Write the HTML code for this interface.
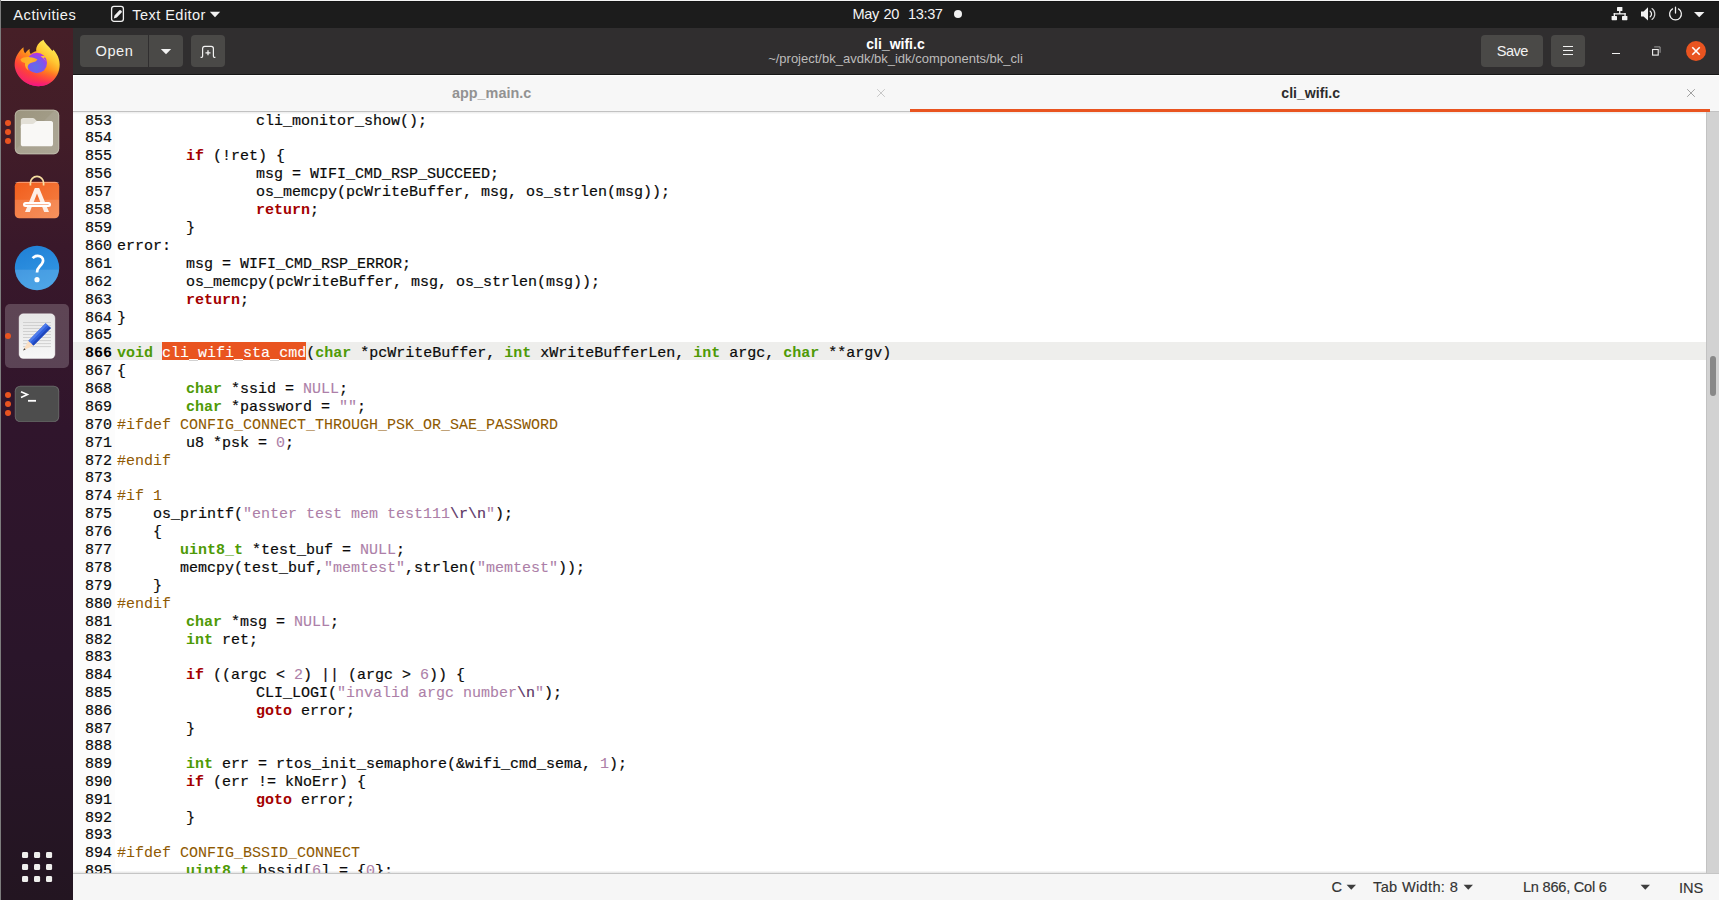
<!DOCTYPE html>
<html>
<head>
<meta charset="utf-8">
<title>cli_wifi.c</title>
<style>
*{box-sizing:border-box;margin:0;padding:0}
html,body{width:1719px;height:900px;overflow:hidden;background:#fff}
body{font-family:"Liberation Sans",sans-serif;position:relative}
.abs{position:absolute}
/* top bar */
#topbar{position:absolute;left:0;top:0;width:1719px;height:28px;background:#1c1c1c;color:#fff}
#topbar .t{position:absolute;top:0;height:28px;line-height:29px;font-size:14.6px;white-space:nowrap;color:#f4f4f4}
/* dock */
#dock{position:absolute;left:0;top:28px;width:73px;height:872px;background:linear-gradient(to bottom,#461f27 0%,#421d28 12%,#39182a 25%,#30152c 46%,#2a152a 72%,#231521 100%)}
.dot{position:absolute;width:6px;height:6px;border-radius:3px;background:#e95420}
/* header bar */
#hdr{position:absolute;left:73px;top:28px;width:1646px;height:47px;background:#302e2f;border-bottom:1px solid #161616}
.btn{position:absolute;top:7px;height:32px;background:#4a4947;border-radius:4px;color:#f2f2f2;font-size:14.6px;line-height:32px;text-align:center}
/* tab bar */
#tabs{position:absolute;left:73px;top:75px;width:1646px;height:37px;background:#f7f7f7;border-top:1px solid #fff;border-left:1px solid #fff}
#tabs .line{position:absolute;left:-1px;top:35px;width:1646px;height:1px;background:#c2c2c2}
#tabs .act{position:absolute;left:836px;top:33px;width:800px;height:3px;background:#e95420}
#tabs .lbl{position:absolute;top:0;margin-left:-1px;height:36px;line-height:37px;font-size:14.4px;font-weight:bold;white-space:nowrap}
/* code */
#code{position:absolute;left:73px;top:112px;width:1633px;height:761px;background:#fff;overflow:hidden}
#gut{position:absolute;left:0;top:0;width:42px;height:761px;background:#fcfcfc}
#curline{position:absolute;left:0;top:230px;width:1633px;height:18px;background:#eeeeec}
#sel{position:absolute;left:89px;top:230px;width:144px;height:18px;background:#e95420}
#src{position:absolute;left:0;top:0;width:1633px;font-family:"Liberation Mono",monospace;font-size:15px;line-height:18px;color:#0a0a0a;-webkit-text-stroke-width:0.2px}
#src div{position:absolute;left:0;height:18px;padding-left:44px;white-space:pre}
#src b{display:inline-block;height:1px}#src .t1{width:69px}#src .t2{width:139px}
#src i{position:absolute;left:12px;top:0;font-style:normal;color:#0a0a0a}
#src .cur i{font-weight:bold;color:#000;-webkit-text-stroke-width:0}
#src .k{color:#a40000;font-weight:bold;-webkit-text-stroke-width:0}
#src .t{color:#4e9a06;font-weight:bold;-webkit-text-stroke-width:0}
#src .s{color:#ad7fa8;-webkit-text-stroke-width:0.1px}
#src .n{color:#ad7fa8;-webkit-text-stroke-width:0.1px}
#src .p{color:#8f5902;-webkit-text-stroke-width:0.05px}
#src .e{color:#5c3566}
#src .x{color:#fff;-webkit-text-stroke-width:0.1px}#src u{color:transparent;text-decoration:none}
/* scrollbar */
#sb{position:absolute;left:1706px;top:112px;width:13px;height:761px;background:#d2d2d2;border-left:1px solid #c2c2c2}
#sb b{position:absolute;left:3px;top:244px;width:6px;height:40px;border-radius:3px;background:#888}
/* status */
#status{position:absolute;left:73px;top:873px;width:1646px;height:27px;background:#f6f6f6;border-top:1px solid #c5c5c5;color:#2c2c2c}
#status .t{position:absolute;top:-1px;height:27px;line-height:29px;font-size:14.6px;white-space:nowrap;color:#333;-webkit-text-stroke-width:0.15px}
</style>
</head>
<body>
<div id="topbar">
  <div class="abs" style="left:0;top:0;width:1719px;height:1px;background:#f4f4f4"></div><div class="abs" style="left:0;top:1px;width:1719px;height:1px;background:#141414"></div>
  <div class="t" style="left:13.3px;top:1.4px;letter-spacing:0.55px">Activities</div>
  <svg class="abs" style="left:108px;top:3px" width="20" height="22" viewBox="0 0 20 22"><rect x="3.6" y="3.3" width="11.8" height="15" rx="2.4" fill="none" stroke="#f2f2f2" stroke-width="1.3"/><path d="M5.8 15.5 L6.5 12.4 L11.4 7.2 Q12.2 6.6 13 7.4 L13.6 8 Q14.3 8.8 13.6 9.5 L8.8 14.6 Z" fill="#f2f2f2"/></svg>
  <div class="t" style="left:132.3px;top:1.4px;letter-spacing:0.42px">Text Editor</div>
  <svg class="abs" style="left:209px;top:11px" width="12" height="7" viewBox="0 0 12 7"><path d="M0.8 0.8 H11.2 L6 6.2 Z" fill="#f2f2f2"/></svg>
  <div class="t" style="left:852.5px;top:0;letter-spacing:-0.42px;word-spacing:1px">May 20&nbsp; 13:37</div>
  <div class="abs" style="left:954px;top:10px;width:8.4px;height:8.4px;border-radius:5px;background:#f2f2f2"></div>
  <svg class="abs" style="left:1608px;top:4px" width="100" height="20" viewBox="0 0 100 20">
    <g fill="#f2f2f2">
      <rect x="9" y="3" width="5.4" height="4" rx="0.6"/><rect x="3.6" y="12" width="5.4" height="4.2" rx="0.6"/><rect x="14" y="12" width="5.4" height="4.2" rx="0.6"/>
      <rect x="11.1" y="6.5" width="1.3" height="3.4"/><rect x="5.7" y="9.2" width="12" height="1.3"/><rect x="5.7" y="9.2" width="1.3" height="3.2"/><rect x="16.4" y="9.2" width="1.3" height="3.2"/>
      <path d="M33 7.4 H35.6 L40 3.3 V16.5 L35.6 12.6 H33 Z"/>
      <path d="M86 8 H96.4 L91.2 13.2 Z"/>
    </g>
    <g fill="none" stroke="#f2f2f2" stroke-linecap="round">
      <path d="M42.2 7.2 A3.6 3.6 0 0 1 42.2 12.8" stroke-width="1.3"/>
      <path d="M44 4.6 A6.6 6.6 0 0 1 44 15.4" stroke-width="1.2" opacity="0.85"/>
      <path d="M64.5 4.9 A5.9 5.9 0 1 0 70.5 4.9" stroke-width="1.25"/>
      <path d="M67.5 3 V9" stroke-width="1.25"/>
    </g>
  </svg>
</div>
<div id="dock">
  <div class="abs" style="left:0;top:-28px;width:1px;height:900px;background:#7d7d7d"></div>
  <!-- firefox : page box (8,34) 60x60 -->
  <svg class="abs" style="left:8px;top:6px" width="60" height="60" viewBox="0 0 60 60">
    <defs>
      <linearGradient id="ffb" x1="46" y1="10" x2="16" y2="50" gradientUnits="userSpaceOnUse">
        <stop offset="0" stop-color="#fff45a"/><stop offset="0.28" stop-color="#ffc732"/><stop offset="0.5" stop-color="#ff8a1c"/><stop offset="0.75" stop-color="#ff4636"/><stop offset="1" stop-color="#ef1c7e"/>
      </linearGradient>
      <radialGradient id="ffg" cx="28" cy="33" r="15" gradientUnits="userSpaceOnUse">
        <stop offset="0" stop-color="#5f6fe6"/><stop offset="0.55" stop-color="#7e55ee"/><stop offset="1" stop-color="#c02fe0"/>
      </radialGradient>
      <linearGradient id="ffh" x1="12" y1="24" x2="30" y2="30" gradientUnits="userSpaceOnUse">
        <stop offset="0" stop-color="#ffa722"/><stop offset="0.6" stop-color="#ffb52c"/><stop offset="1" stop-color="#ff9a1e"/>
      </linearGradient>
      <linearGradient id="ffm" x1="30" y1="36" x2="30" y2="52.5" gradientUnits="userSpaceOnUse">
        <stop offset="0" stop-color="#ff3a3a" stop-opacity="0"/><stop offset="0.55" stop-color="#ff2a5a" stop-opacity="0.45"/><stop offset="1" stop-color="#f0108c" stop-opacity="1"/>
      </linearGradient>
    </defs>
    <path d="M15.5 13.3 C15.3 16 16 18 17.2 19.3 C18.5 17.5 20 16 21.7 15 C21.3 17 21.8 18.8 22.8 20 C24.5 18.5 26.5 17.5 28.3 17.2 C27.5 12.5 31 8 35.5 5.7 C36.5 9 41 12.5 44.5 17 L45.3 15.6 C48 18.5 50 22 50.8 25 C53 32 51 40 46 45.5 C41 51 33 53.5 25 51.5 C16 49.5 8.5 42 7 34 C6 28.5 7.5 23 10 19.5 C11.5 17 13.5 14.8 15.5 13.3 Z" fill="url(#ffb)"/>
    <path d="M15.5 13.3 C15.3 16 16 18 17.2 19.3 C18.5 17.5 20 16 21.7 15 C21.3 17 21.8 18.8 22.8 20 C24.5 18.5 26.5 17.5 28.3 17.2 C27.5 12.5 31 8 35.5 5.7 C36.5 9 41 12.5 44.5 17 L45.3 15.6 C48 18.5 50 22 50.8 25 C53 32 51 40 46 45.5 C41 51 33 53.5 25 51.5 C16 49.5 8.5 42 7 34 C6 28.5 7.5 23 10 19.5 C11.5 17 13.5 14.8 15.5 13.3 Z" fill="url(#ffm)"/>
    <circle cx="28.8" cy="29" r="10.2" fill="url(#ffg)"/>
    <path d="M12.4 25.6 C14.5 23.4 18 22.8 22 23.2 C25 23.6 27.8 24.4 29.4 25.3 C28.8 27.2 26.6 28 24.2 28.6 C22 29.2 20.4 30.2 19.8 32 C19.4 33.4 19.8 35 20.6 36.4 C17.8 34.8 16.6 31.8 17 29 C14.8 28.8 12.8 27.6 12.4 25.6 Z" fill="url(#ffh)"/>
    <path d="M32.6 22.3 C34.8 21.5 37 22 38.4 23.3 C37.2 23.1 36.2 23.3 35.6 23.9 C36.8 25.2 37.6 26.6 38 28 C36.8 25.8 35 23.8 32.6 22.3 Z" fill="#ffc033"/>
  </svg>
  <!-- dots -->
  <div class="dot" style="left:5px;top:92.3px"></div><div class="dot" style="left:5px;top:101px"></div><div class="dot" style="left:5px;top:109.8px"></div>
  <!-- files : page (14.8,109.7)-(59.2,154.3) -->
  <svg class="abs" style="left:13px;top:80px" width="48" height="48" viewBox="0 0 48 48">
    <defs><linearGradient id="fbg" x1="0" y1="0" x2="1" y2="1"><stop offset="0" stop-color="#9c957f"/><stop offset="0.45" stop-color="#a19b86"/><stop offset="0.46" stop-color="#a8a290"/><stop offset="1" stop-color="#aca695"/></linearGradient></defs>
    <rect x="1.8" y="1.7" width="44.4" height="44.6" rx="5.5" fill="url(#fbg)"/>
    <rect x="2.3" y="2.2" width="43.4" height="43.6" rx="5" fill="none" stroke="#c9c5b8" stroke-width="0.9" opacity="0.7"/>
    <path d="M7.8 12.6 Q7.8 10 10.4 10 H19.8 Q20.8 10 21.6 10.8 L23.8 13 H37.4 Q40 13 40 15.6 V20 H7.8 Z" fill="#e3e0d7"/>
    <path d="M7.8 18.5 Q7.8 16 10.3 16 H19.4 Q20.4 16 21.2 15.3 L22.8 13.8 Q23.6 13 24.6 13 H37.4 Q40 13 40 15.6 V35.7 Q40 38.3 37.4 38.3 H10.4 Q7.8 38.3 7.8 35.7 Z" fill="#f9f8f6"/>
  </svg>
  <!-- software : page bag (14.8,181.7)-(59.2,218.3) -->
  <svg class="abs" style="left:13px;top:144px" width="48" height="50" viewBox="0 0 48 50">
    <defs><linearGradient id="sbg" x1="0" y1="0" x2="1" y2="1"><stop offset="0" stop-color="#f15d1c"/><stop offset="1" stop-color="#f58246"/></linearGradient></defs>
    <rect x="1.8" y="9.7" width="44.4" height="36.6" rx="4.5" fill="url(#sbg)"/>
    <path d="M1.8 27.7 H46.2 V41.8 Q46.2 46.3 41.7 46.3 H6.3 Q1.8 46.3 1.8 41.8 Z" fill="#fff" opacity="0.13"/>
    <rect x="2.3" y="10.1" width="43.4" height="1" rx="0.5" fill="#fff" opacity="0.35"/>
    <path d="M17.4 13.6 V11 A6.6 6.6 0 0 1 30.6 11 V13.6" fill="none" stroke="#f7dfa2" stroke-width="1.7"/>
    <path d="M12 40 L21.8 16 H26.2 L36 40 H31.2 L24 21.6 L16.8 40 Z" fill="#fdeee6"/>
    <rect x="10" y="30" width="28" height="5" rx="2.5" fill="#fff"/>
    <rect x="12.4" y="32.1" width="23.2" height="0.8" fill="#f6a27c"/>
  </svg>
  <!-- help : circle centre page (37,268) r 22.2 -->
  <svg class="abs" style="left:13px;top:216px" width="48" height="48" viewBox="0 0 48 48">
    <defs><linearGradient id="hbg" x1="0" y1="0" x2="0.35" y2="1"><stop offset="0" stop-color="#1f7fd6"/><stop offset="1" stop-color="#3397e3"/></linearGradient><clipPath id="hcl"><circle cx="24" cy="24" r="22.2"/></clipPath></defs>
    <circle cx="24" cy="24" r="22.2" fill="url(#hbg)"/>
    <rect x="0" y="25.7" width="48" height="24" fill="#fff" opacity="0.13" clip-path="url(#hcl)"/>
    <path d="M19.6 14.2 C21 12.6 22.8 11.8 24.8 11.9 C28 12 30.2 14 30.1 16.7 C30 18.8 28.6 20.4 26.8 22.2 C25 24 24 25.6 24 28.6" fill="none" stroke="#fff" stroke-width="2.7"/>
    <circle cx="24" cy="35.7" r="2.6" fill="#fff"/>
  </svg>
  <!-- gedit active -->
  <div class="abs" style="left:5px;top:276px;width:64px;height:64px;border-radius:5px;background:rgba(255,255,255,0.2)"></div>
  <div class="dot" style="left:5px;top:305px"></div>
  <svg class="abs" style="left:13px;top:282px" width="48" height="52" viewBox="0 0 48 52">
    <defs><linearGradient id="pbg" x1="0" y1="0" x2="0" y2="1"><stop offset="0" stop-color="#e6e6e6"/><stop offset="1" stop-color="#f7f7f7"/></linearGradient></defs>
    <rect x="6.1" y="3.8" width="35.8" height="44.6" rx="4.2" fill="url(#pbg)"/>
    <rect x="6.1" y="3.8" width="35.8" height="44.6" rx="4.2" fill="none" stroke="#fff" stroke-width="0.6" opacity="0.7"/>
    <g fill="#cdcdcd"><rect x="10" y="12" width="28" height="0.9"/><rect x="10" y="15" width="28" height="0.9"/><rect x="10" y="18" width="28" height="0.9"/><rect x="10" y="21.1" width="28" height="0.9"/><rect x="10" y="24.1" width="28" height="0.9"/><rect x="10" y="27.1" width="28" height="0.9"/><rect x="10" y="30.2" width="28" height="0.9"/><rect x="10" y="33.2" width="28" height="0.9"/><rect x="10" y="36.2" width="28" height="0.9"/></g>
    <path d="M10 40.6 L15.4 30.8 L20.6 35.6 Z" fill="#fbdfc2"/>
    <path d="M10 40.6 L11.3 38.2 L12.7 39.4 Z" fill="#3b3b3b"/>
    <path d="M15.4 30.8 L32.6 13.2 L37.9 18 L20.6 35.6 Z" fill="#2f5fdc"/>
    <path d="M15.4 30.8 L32.6 13.2 L34.4 14.8 L17.1 32.4 Z" fill="#4f7cec"/>
    <path d="M18.9 34 L36.1 16.4 L37.9 18 L20.6 35.6 Z" fill="#2047bd"/>
  </svg>
  <!-- terminal : page (14.8,385.7)-(59.2,422.1) -->
  <div class="dot" style="left:5px;top:364.3px"></div><div class="dot" style="left:5px;top:373px"></div><div class="dot" style="left:5px;top:381.8px"></div>
  <svg class="abs" style="left:13px;top:354px" width="48" height="44" viewBox="0 0 48 44">
    <rect x="1.8" y="3.7" width="44.4" height="36.4" rx="5.5" fill="#6c6c6c"/>
    <rect x="2.6" y="4.6" width="42.8" height="34.8" rx="4.8" fill="#4d4d4d"/>
    <path d="M8 9.7 L14.4 12.6 L8 15.5" fill="none" stroke="#fff" stroke-width="1.6"/>
    <rect x="15" y="17.9" width="8" height="1.8" fill="#fff"/>
  </svg>
  <!-- show apps -->
  <svg class="abs" style="left:20px;top:822px" width="34" height="34" viewBox="0 0 34 34"><g fill="#efefed"><rect x="2" y="2" width="6.1" height="6.1" rx="1.4"/><rect x="14" y="2" width="6.1" height="6.1" rx="1.4"/><rect x="26" y="2" width="6.1" height="6.1" rx="1.4"/><rect x="2" y="14" width="6.1" height="6.1" rx="1.4"/><rect x="14" y="14" width="6.1" height="6.1" rx="1.4"/><rect x="26" y="14" width="6.1" height="6.1" rx="1.4"/><rect x="2" y="26" width="6.1" height="6.1" rx="1.4"/><rect x="14" y="26" width="6.1" height="6.1" rx="1.4"/><rect x="26" y="26" width="6.1" height="6.1" rx="1.4"/></g></svg>

</div>
<div id="hdr">
  <div class="btn" style="left:7px;width:68px;border-radius:4px 0 0 4px;letter-spacing:0.55px;padding-left:1px">Open</div>
  <div class="btn" style="left:76px;width:34px;border-radius:0 4px 4px 0"><svg class="abs" style="left:11px;top:13px" width="12" height="7" viewBox="0 0 12 7"><path d="M0.8 0.9 H11.2 L6 6.3 Z" fill="#f2f2f2"/></svg></div>
  <div class="btn" style="left:118px;width:34px"><svg class="abs" style="left:8px;top:9px" width="18" height="15" viewBox="0 0 18 15"><path d="M1.6 13.4 H2.6 Q3.6 13.4 3.6 12.2 V4.6 Q3.6 2.4 5.8 2.4 H12.2 Q14.4 2.4 14.4 4.6 V12.2 Q14.4 13.4 15.4 13.4 H16.4" fill="none" stroke="#f2f2f2" stroke-width="1.2"/><path d="M9 6.3 V11.3 M6.5 8.8 H11.5" stroke="#f2f2f2" stroke-width="1.3" fill="none"/></svg></div>
  <div class="btn" style="left:1408px;width:62px;letter-spacing:-0.55px;padding-left:0.5px">Save</div>
  <div class="btn" style="left:1478px;width:34px"><div class="abs" style="left:12px;top:11.2px;width:10px;height:1.2px;background:#f2f2f2"></div><div class="abs" style="left:12px;top:15.2px;width:10px;height:1.2px;background:#f2f2f2"></div><div class="abs" style="left:12px;top:19.1px;width:10px;height:1.2px;background:#f2f2f2"></div></div>
  <div class="abs" style="left:1539px;top:25px;width:8.2px;height:1.2px;background:#f2f2f2"></div>
  <svg class="abs" style="left:1576px;top:16px" width="14" height="14" viewBox="0 0 14 14"><path d="M5.2 2.9 H11.1 V8.8" fill="none" stroke="#9b9b9b" stroke-width="1"/><rect x="3.6" y="5.5" width="5.6" height="5.6" fill="none" stroke="#f2f2f2" stroke-width="1.1"/></svg>
  <div class="abs" style="left:1613px;top:13px;width:20px;height:20px;border-radius:10px;background:#e95420"></div>
  <svg class="abs" style="left:1613px;top:13px" width="20" height="20" viewBox="0 0 20 20"><path d="M6.3 6.3 L13.7 13.7 M13.7 6.3 L6.3 13.7" stroke="#fff" stroke-width="1.6" fill="none"/></svg>
  <div class="abs" style="left:0;top:7px;width:1645px;text-align:center;font-size:14px;font-weight:bold;color:#fff;line-height:18px">cli_wifi.c</div>
  <div class="abs" style="left:0;top:23.3px;width:1645px;text-align:center;font-size:13px;color:#bdbcbb;line-height:16px">~/project/bk_avdk/bk_idk/components/bk_cli</div>
</div>
<div id="tabs">
  <div class="line"></div>
  <div class="act"></div>
  <div class="lbl" style="left:379px;top:-1px;color:#929292">app_main.c</div>
  <div class="lbl" style="left:1208.3px;top:-1px;color:#2c2c2c;font-size:14.1px">cli_wifi.c</div>
  <svg class="abs" style="left:802px;top:12px" width="10" height="10" viewBox="0 0 10 10"><path d="M1.2 1.2 L8.8 8.8 M8.8 1.2 L1.2 8.8" stroke="#c8c8c8" stroke-width="1" fill="none"/></svg>
  <svg class="abs" style="left:1612px;top:12px" width="10" height="10" viewBox="0 0 10 10"><path d="M1.2 1.2 L8.8 8.8 M8.8 1.2 L1.2 8.8" stroke="#a0a0a0" stroke-width="1" fill="none"/></svg>
</div>
<div id="code">
  <div id="gut"></div>
  <div class="abs" style="left:0;top:0;width:1633px;height:2px;background:linear-gradient(to bottom,#ececec,#fbfbfb)"></div>
  <div class="abs" style="left:0;top:759px;width:1633px;height:2px;background:linear-gradient(to bottom,#fbfbfb,#e4e4e4)"></div>
  <div id="curline"></div>
  <div id="sel"></div>
  <div class="abs" style="left:116px;top:247px;width:9px;height:1px;background:#fff"></div><div class="abs" style="left:116px;top:248px;width:9px;height:1px;background:#d2d2d2"></div><div class="abs" style="left:161px;top:247px;width:9px;height:1px;background:#fff"></div><div class="abs" style="left:161px;top:248px;width:9px;height:1px;background:#d2d2d2"></div><div class="abs" style="left:197px;top:247px;width:9px;height:1px;background:#fff"></div><div class="abs" style="left:197px;top:248px;width:9px;height:1px;background:#d2d2d2"></div>
  <div id="src">
<div style="top:1px"><i>853</i><b class="t2"></b>cli_monitor_show();</div>
<div style="top:18px"><i>854</i></div>
<div style="top:36px"><i>855</i><b class="t1"></b><span class="k">if</span> (!ret) {</div>
<div style="top:54px"><i>856</i><b class="t2"></b>msg = WIFI_CMD_RSP_SUCCEED;</div>
<div style="top:72px"><i>857</i><b class="t2"></b>os_memcpy(pcWriteBuffer, msg, os_strlen(msg));</div>
<div style="top:90px"><i>858</i><b class="t2"></b><span class="k">return</span>;</div>
<div style="top:108px"><i>859</i><b class="t1"></b>}</div>
<div style="top:126px"><i>860</i>error:</div>
<div style="top:144px"><i>861</i><b class="t1"></b>msg = WIFI_CMD_RSP_ERROR;</div>
<div style="top:162px"><i>862</i><b class="t1"></b>os_memcpy(pcWriteBuffer, msg, os_strlen(msg));</div>
<div style="top:180px"><i>863</i><b class="t1"></b><span class="k">return</span>;</div>
<div style="top:198px"><i>864</i>}</div>
<div style="top:215px"><i>865</i></div>
<div class="cur" style="top:233px"><i>866</i><span class="t">void</span> <span class="x">cli<u>_</u>wifi<u>_</u>sta<u>_</u>cmd</span>(<span class="t">char</span> *pcWriteBuffer, <span class="t">int</span> xWriteBufferLen, <span class="t">int</span> argc, <span class="t">char</span> **argv)</div>
<div style="top:251px"><i>867</i>{</div>
<div style="top:269px"><i>868</i><b class="t1"></b><span class="t">char</span> *ssid = <span class="n">NULL</span>;</div>
<div style="top:287px"><i>869</i><b class="t1"></b><span class="t">char</span> *password = <span class="s">""</span>;</div>
<div style="top:305px"><i>870</i><span class="p">#ifdef CONFIG_CONNECT_THROUGH_PSK_OR_SAE_PASSWORD</span></div>
<div style="top:323px"><i>871</i><b class="t1"></b>u8 *psk = <span class="n">0</span>;</div>
<div style="top:341px"><i>872</i><span class="p">#endif</span></div>
<div style="top:358px"><i>873</i></div>
<div style="top:376px"><i>874</i><span class="p">#if 1</span></div>
<div style="top:394px"><i>875</i>    os_printf(<span class="s">"enter test mem test111</span><span class="e">\r\n</span><span class="s">"</span>);</div>
<div style="top:412px"><i>876</i>    {</div>
<div style="top:430px"><i>877</i>       <span class="t">uint8_t</span> *test_buf = <span class="n">NULL</span>;</div>
<div style="top:448px"><i>878</i>       memcpy(test_buf,<span class="s">"memtest"</span>,strlen(<span class="s">"memtest"</span>));</div>
<div style="top:466px"><i>879</i>    }</div>
<div style="top:484px"><i>880</i><span class="p">#endif</span></div>
<div style="top:502px"><i>881</i><b class="t1"></b><span class="t">char</span> *msg = <span class="n">NULL</span>;</div>
<div style="top:520px"><i>882</i><b class="t1"></b><span class="t">int</span> ret;</div>
<div style="top:537px"><i>883</i></div>
<div style="top:555px"><i>884</i><b class="t1"></b><span class="k">if</span> ((argc &lt; <span class="n">2</span>) || (argc &gt; <span class="n">6</span>)) {</div>
<div style="top:573px"><i>885</i><b class="t2"></b>CLI_LOGI(<span class="s">"invalid argc number</span><span class="e">\n</span><span class="s">"</span>);</div>
<div style="top:591px"><i>886</i><b class="t2"></b><span class="k">goto</span> error;</div>
<div style="top:609px"><i>887</i><b class="t1"></b>}</div>
<div style="top:626px"><i>888</i></div>
<div style="top:644px"><i>889</i><b class="t1"></b><span class="t">int</span> err = rtos_init_semaphore(&amp;wifi_cmd_sema, <span class="n">1</span>);</div>
<div style="top:662px"><i>890</i><b class="t1"></b><span class="k">if</span> (err != kNoErr) {</div>
<div style="top:680px"><i>891</i><b class="t2"></b><span class="k">goto</span> error;</div>
<div style="top:698px"><i>892</i><b class="t1"></b>}</div>
<div style="top:715px"><i>893</i></div>
<div style="top:733px"><i>894</i><span class="p">#ifdef CONFIG_BSSID_CONNECT</span></div>
<div style="top:751px"><i>895</i><b class="t1"></b><span class="t">uint8_t</span> bssid[<span class="n">6</span>] = {<span class="n">0</span>};</div>
  </div>
</div>
<div id="sb"><b></b></div>
<div id="status">
  <div class="t" style="left:1258.5px">C</div>
  <svg class="abs sa" style="left:1273px;top:10px" width="11" height="7" viewBox="0 0 11 7"><path d="M0.6 0.8 H10 L5.3 5.8 Z" fill="#3d3d3d"/></svg>
  <div class="t" style="left:1300px;letter-spacing:0.33px">Tab Width: 8</div>
  <svg class="abs sa" style="left:1390px;top:10px" width="11" height="7" viewBox="0 0 11 7"><path d="M0.6 0.8 H10 L5.3 5.8 Z" fill="#3d3d3d"/></svg>
  <div class="t" style="left:1450px;letter-spacing:-0.25px">Ln 866, Col 6</div>
  <svg class="abs sa" style="left:1566.5px;top:10px" width="11" height="7" viewBox="0 0 11 7"><path d="M0.6 0.8 H10 L5.3 5.8 Z" fill="#3d3d3d"/></svg>
  <div class="t" style="left:1606px;top:0px">INS</div>
</div>
</body>
</html>
